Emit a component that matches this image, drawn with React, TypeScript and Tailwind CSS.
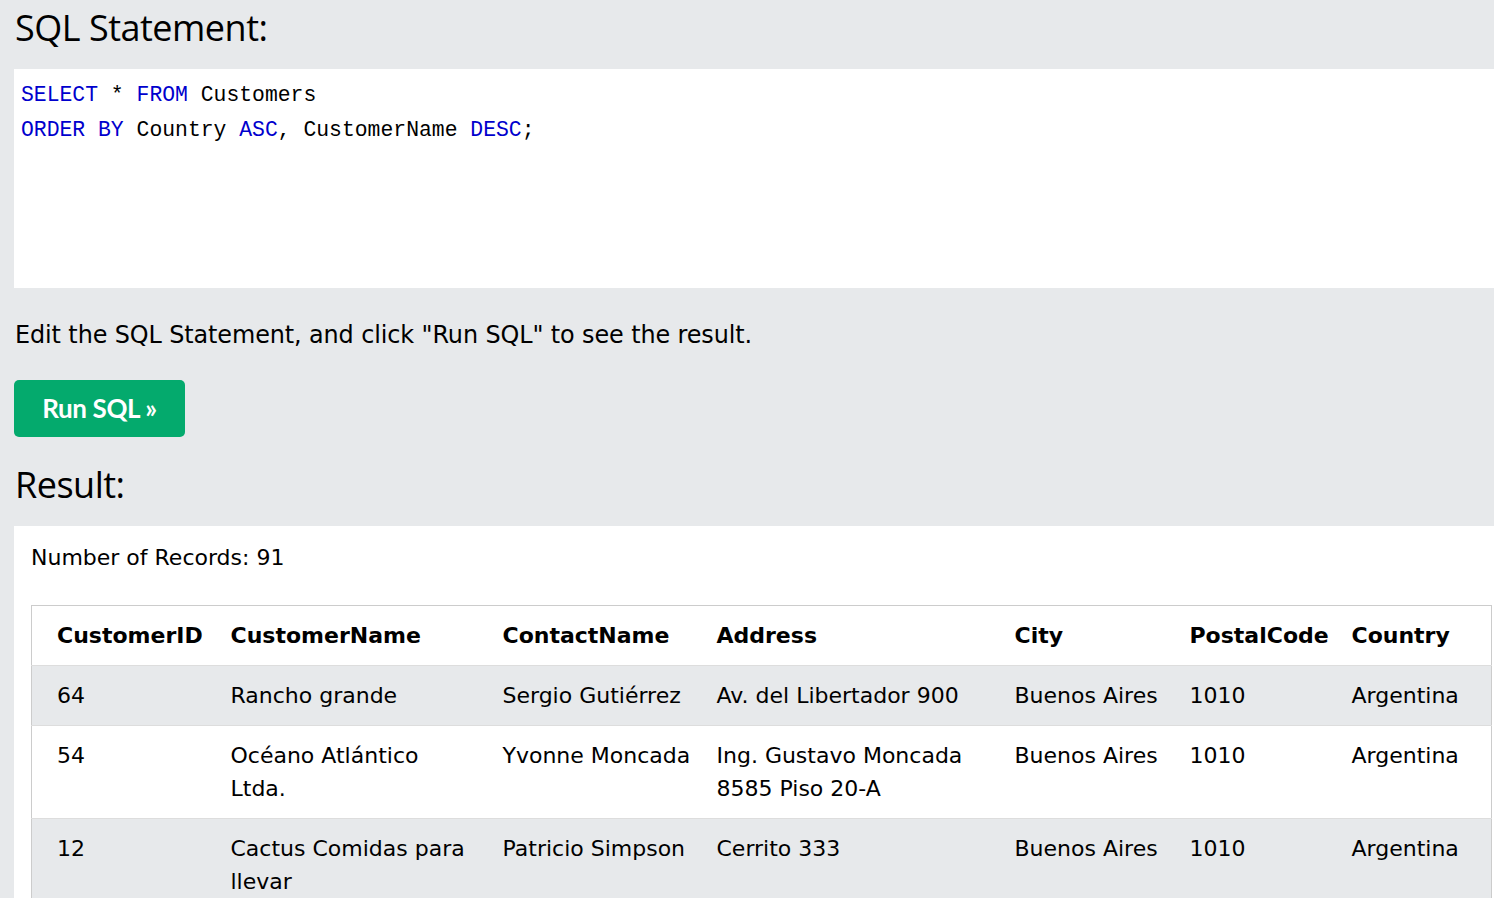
const rows = [
  ["64", "Rancho grande", "Sergio Gutiérrez", "Av. del Libertador 900", "Buenos Aires", "1010", "Argentina"],
  ["54", "Océano Atlántico Ltda.", "Yvonne Moncada", "Ing. Gustavo Moncada 8585 Piso 20-A", "Buenos Aires", "1010", "Argentina"],
  ["12", "Cactus Comidas para llevar", "Patricio Simpson", "Cerrito 333", "Buenos Aires", "1010", "Argentina"],
];

const headers = ["CustomerID", "CustomerName", "ContactName", "Address", "City", "PostalCode", "Country"];
const widths = [189, 272, 214, 298, 175, 162, 150];

const kw = "text-[#0000cd]";

export default function App() {
  return (
    <div className="min-h-[898px] w-[1494px] overflow-hidden bg-[#e7e9eb] text-black font-['DejaVu_Sans',sans-serif]">
      <h2 className="h-[69px] pl-[15px] pt-[4px] text-[36px] leading-[48px] font-normal font-['Open_Sans',sans-serif] tracking-[-0.5px]">
        SQL Statement:
      </h2>
      <div className="ml-[14px] h-[219px] bg-white pl-[7px] pt-[9px] font-['Liberation_Mono',monospace] text-[21.4px] leading-[35px]">
        <div>
          <span className={kw}>SELECT</span> * <span className={kw}>FROM</span> Customers
        </div>
        <div>
          <span className={kw}>ORDER</span> <span className={kw}>BY</span> Country <span className={kw}>ASC</span>, CustomerName{" "}
          <span className={kw}>DESC</span>;
        </div>
      </div>
      <p className="pl-[15px] pt-[31px] text-[23.9px] leading-[33px] tracking-[-0.1px]">
        Edit the SQL Statement, and click "Run SQL" to see the result.
      </p>
      <div className="pl-[14px] pt-[28px]">
        <button className="h-[57px] w-[171px] rounded-[5px] bg-[#04aa6d] text-white text-[26px] font-bold font-['Lato',sans-serif] tracking-[-0.4px]">
          Run SQL »
        </button>
      </div>
      <h2 className="pl-[15px] pt-[24px] h-[89px] text-[36px] leading-[48px] font-normal font-['Open_Sans',sans-serif] tracking-[-0.5px]">
        Result:
      </h2>
      <div className="ml-[14px] bg-white pl-[17px] pt-[15px] pb-[10px] min-h-[400px]">
        <div className="text-[22px] leading-[33px]">Number of Records: 91</div>
        <table className="mt-[31px] table-fixed border-collapse border border-[#cccccc] text-[22px] leading-[33px]">
          <colgroup>
            {widths.map((w, i) => (
              <col key={i} style={{ width: w }} />
            ))}
          </colgroup>
          <thead>
            <tr className="bg-white">
              {headers.map((h, i) => (
                <th key={h} className={`text-left font-bold py-[13px] pr-[8px] ${i === 0 ? "pl-[25px]" : "pl-[10px]"}`}>
                  {h}
                </th>
              ))}
            </tr>
          </thead>
          <tbody>
            {rows.map((r, ri) => (
              <tr key={ri} className={`border-t border-[#dddddd] ${ri % 2 === 0 ? "bg-[#e7e9eb]" : "bg-white"}`}>
                {r.map((c, i) => (
                  <td
                    key={i}
                    className={`align-top py-[13px] ${i === 1 ? "pr-[16px]" : "pr-[10px]"} ${i === 0 ? "pl-[25px]" : "pl-[10px]"}`}
                  >
                    {c}
                  </td>
                ))}
              </tr>
            ))}
          </tbody>
        </table>
      </div>
    </div>
  );
}
